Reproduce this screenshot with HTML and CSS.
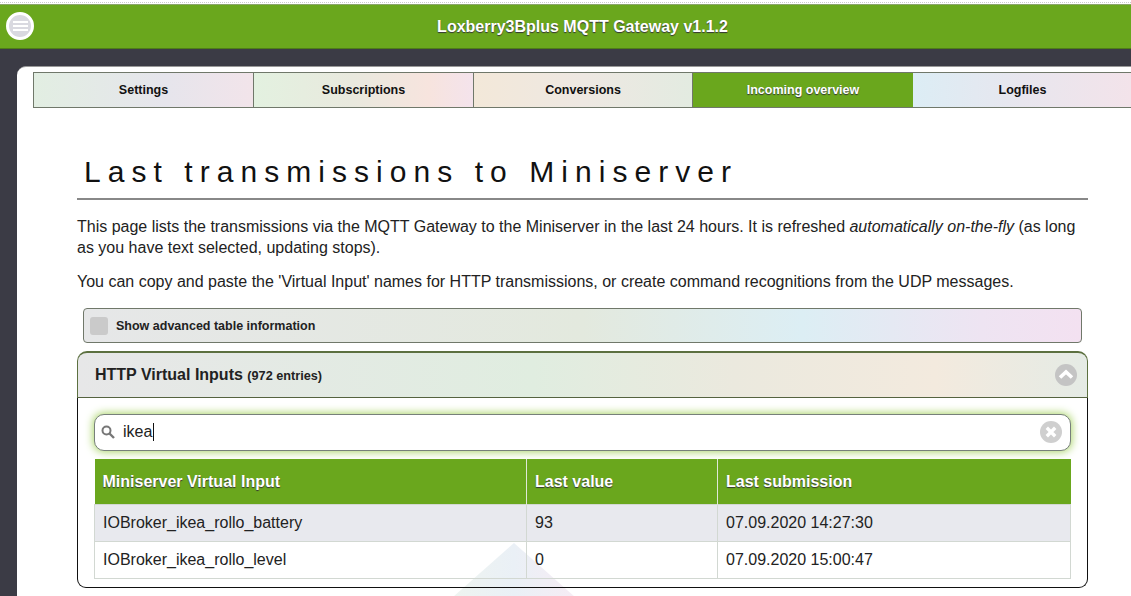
FILE: index.html
```html
<!DOCTYPE html>
<html lang="en">
<head>
<meta charset="utf-8">
<title>Loxberry3Bplus MQTT Gateway</title>
<link rel="stylesheet" href="styles.css">
</head>
<body>
<div class="dotted"></div>
<header class="topbar">
  <button class="menu-btn" aria-label="Menu"><span></span><span></span><span></span></button>
  <h1>Loxberry3Bplus MQTT Gateway v1.1.2</h1>
</header>
<main class="shell">
  <div class="card">
    <div class="watermark"></div>
    <nav class="tabs">
      <a class="tab t1">Settings</a>
      <a class="tab t2">Subscriptions</a>
      <a class="tab t3">Conversions</a>
      <a class="tab active">Incoming overview</a>
      <a class="tab t5">Logfiles</a>
    </nav>
    <section class="content">
      <h2 class="title">Last transmissions to Miniserver</h2>
      <p class="p1">This page lists the transmissions via the MQTT Gateway to the Miniserver in the last 24 hours. It is refreshed <em>automatically on-the-fly</em> (as long as you have text selected, updating stops).</p>
      <p class="p2">You can copy and paste the 'Virtual Input' names for HTTP transmissions, or create command recognitions from the UDP messages.</p>
      <label class="advanced"><span class="check"></span>Show advanced table information</label>
      <div class="panel">
        <div class="panel-head">
          <span class="panel-title">HTTP Virtual Inputs <small>(972 entries)</small></span>
          <svg class="collapse" width="22" height="22" viewBox="0 0 22 22"><circle cx="11" cy="11" r="11" fill="#c4c4c4"/><path d="M5 13.500 11 8l6 5.500" fill="none" stroke="#fff" stroke-width="3.600"/></svg>
        </div>
        <div class="panel-body">
          <div class="search">
            <svg class="glass" width="14" height="14" viewBox="0 0 14 14"><circle cx="5.500" cy="5.500" r="4" fill="none" stroke="#777" stroke-width="2"/><path d="M8.500 8.500 13 13" stroke="#777" stroke-width="2.400"/></svg>
            <span class="query">ikea</span><span class="caret"></span>
            <svg class="clear" width="22" height="22" viewBox="0 0 22 22"><circle cx="11" cy="11" r="11" fill="#cfcfcf"/><path d="M6.800 6.800l8.400 8.400M15.200 6.800l-8.400 8.400" stroke="#fff" stroke-width="3.400"/></svg>
          </div>
          <table class="grid">
            <thead><tr><th class="c1">Miniserver Virtual Input</th><th class="c2">Last value</th><th>Last submission</th></tr></thead>
            <tbody>
              <tr class="odd"><td>IOBroker_ikea_rollo_battery</td><td>93</td><td>07.09.2020 14:27:30</td></tr>
              <tr><td>IOBroker_ikea_rollo_level</td><td>0</td><td>07.09.2020 15:00:47</td></tr>
            </tbody>
          </table>
        </div>
      </div>
    </section>
  </div>
</main>
</body>
</html>
```
FILE: styles.css
```css
* { box-sizing: border-box; }
html, body { margin: 0; height: 596px; overflow: hidden; }
body {
  font-family: "Liberation Sans", Arial, sans-serif;
  color: #111;
  background: #fff;
  padding-top: 2px;
  display: flex;
  flex-direction: column;
}
.dotted { height: 2px; flex: none; border-top: 1px dotted #ccc; }
.topbar {
  height: 45px;
  flex: none;
  background: #6aa71d;
  border-top: 1px solid #8aa56a;
  border-bottom: 1px solid #4f7d18;
  display: flex;
  align-items: center;
  position: relative;
}
.topbar h1 {
  margin: 0;
  width: 100%;
  text-align: center;
  font-size: 16px;
  font-weight: bold;
  color: #fff;
  text-shadow: 0 1px 1px #333;
  padding-left: 34px;
}
.menu-btn {
  position: absolute;
  left: 6px;
  top: 7px;
  width: 28px;
  height: 28px;
  border-radius: 50%;
  border: 3px solid #fff;
  background: #d9d9e0;
  padding: 0;
  display: flex;
  flex-direction: column;
  justify-content: center;
  align-items: center;
  gap: 2px;
}
.menu-btn span { width: 15px; height: 2px; background: #fff; display: block; }
.shell {
  flex: 1;
  background: #3b3b45;
  padding: 17px 0 0 17px;
  min-height: 0;
}
.card {
  position: relative;
  background: #fff;
  height: 100%;
  border-top: 1px solid #999;
  border-top-left-radius: 9px;
  padding: 5px 0 0 16px;
  overflow: hidden;
}
.watermark {
  position: absolute;
  left: 436px;
  top: 476px;
  width: 122px;
  height: 54px;
  background: linear-gradient(90deg, #eef4f0, #eaf0f6 50%, #f6ecf4);
  clip-path: polygon(50% 0, 100% 100%, 0 100%);
}
.tabs {
  position: relative;
  display: flex;
  width: 1120px;
  height: 36px;
  border: 1px solid #70786a;
  border-right: 0;
}
.tab {
  width: 220px;
  flex: none;
  display: flex;
  align-items: center;
  justify-content: center;
  font-size: 12.500px;
  font-weight: bold;
  color: #111;
  border-right: 1px solid #70786a;
}
.t1 { background: linear-gradient(90deg, #e2eee2, #e6e5ec 60%, #f2e4ea); }
.t2 { background: linear-gradient(90deg, #e3f1e0, #e9e9de 45%, #f7e4de 80%, #f4e3ec); }
.t3 { width: 219px; background: linear-gradient(90deg, #f3e8d9, #eee8e2 50%, #e3ebe1); }
.tab.active {
  width: 220px;
  background: #6aa71d;
  color: #fff;
  text-shadow: 0 1px 1px #333;
  border-right: 0;
}
.t5 { background: linear-gradient(90deg, #dcedf5, #e8e6ee 50%, #f3e3ea); }
.content { position: relative; padding: 0 0 0 44px; width: 1055px; }
.title {
  margin: 47px 0 0;
  padding: 0 0 9px 7px;
  height: 45px;
  font-size: 30px;
  line-height: 34px;
  font-weight: normal;
  letter-spacing: 7.050px;
  color: #111;
  border-bottom: 2px solid #888;
  white-space: nowrap;
}
.p1, .p2 { font-size: 16px; line-height: 21px; margin: 0; color: #222; }
.p1 { margin-top: 16px; width: 1005px; }
.p2 { margin-top: 13px; white-space: nowrap; }
.advanced {
  display: flex;
  align-items: center;
  margin: 16px 6px 0 6px;
  height: 35px;
  border: 1px solid #70786a;
  border-radius: 4px;
  font-size: 12.500px;
  font-weight: bold;
  color: #222;
  padding-left: 6px;
  background: linear-gradient(90deg, #e6e7e8, #e3e9de 50%, #dceef4 72%, #eee4f2 90%, #f3e1f1);
}
.check { width: 18px; height: 18px; background: #cacaca; border-radius: 3px; margin-right: 8px; }
.panel { margin-top: 8px; width: 1011px; }
.panel-head {
  height: 47px;
  display: flex;
  align-items: center;
  justify-content: space-between;
  padding: 0 0 0 17px;
  border: 1px solid #5c7040;
  border-top-width: 2px;
  border-bottom-color: #55633f;
  border-radius: 10px 10px 0 0;
  background: linear-gradient(90deg, #e7e7e8, #e0ede0 45%, #ebe9de 65%, #f3eade 85%, #e5ebe5);
}
.panel-title { font-size: 16px; font-weight: bold; color: #222; }
.panel-title small { font-size: 12.700px; }
.collapse { margin-right: 10px; }
.panel-body {
  height: 190px;
  border: 1px solid #111;
  border-top: 0;
  border-radius: 0 0 9px 9px;
  padding: 16px 16px 0 16px;
}
.search {
  height: 37px;
  border: 1px solid #77807a;
  border-radius: 10px;
  background: #fff;
  box-shadow: 0 0 9px 1px #a9d468;
  display: flex;
  align-items: center;
  padding: 0 0 2px 6px;
  font-size: 16px;
  color: #222;
}
.glass { margin-right: 8px; }
.caret { width: 1px; height: 18px; background: #111; margin-left: 1px; }
.clear { margin-left: auto; margin-right: 8px; }
.grid {
  width: 100%;
  margin-top: 8px;
  border-collapse: collapse;
  table-layout: fixed;
  font-size: 16px;
}
.grid th {
  height: 45px;
  background: #6aa71d;
  color: #fff;
  font-size: 16px;
  text-align: left;
  padding: 1px 8px 0;
  text-shadow: 0 1px 1px #333;
  border-right: 1px solid #dfe8d8;
}
.grid th:last-child { border-right: 0; }
.grid td {
  height: 37px;
  padding: 0 8px;
  color: #222;
  border: 1px solid #d2d8d2;
}
.grid .odd td { background: #e8e9ee; }
.c1 { width: 432px; }
.c2 { width: 191px; }
```
